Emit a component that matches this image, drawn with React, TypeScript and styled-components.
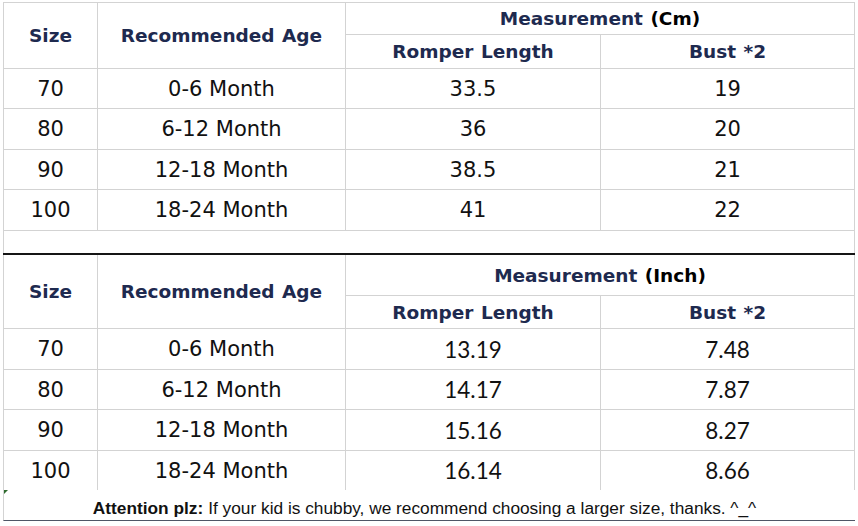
import React from "react";
import styled, { createGlobalStyle } from "styled-components";

const GlobalStyle = createGlobalStyle`
  html, body { margin: 0; padding: 0; background: #ffffff; }
`;

const comic = `"DejaVu Sans", "Noto Sans", sans-serif`;

const Sheet = styled.div`
  width: 852px;
  padding: 2px 0 0 3px;
  display: flex;
  flex-direction: column;
`;

const Grid = styled.div<{ $rows: string; $top?: boolean }>`
  display: grid;
  grid-template-columns: 93px 247px 254px 253px;
  grid-template-rows: ${(p) => p.$rows};
  gap: 1px;
  background: #d3d3d3;
  padding: ${(p) => (p.$top ? "1px 1px 0 1px" : "0 1px 0 1px")};
`;

const Cell = styled.div<{ $row?: string; $col?: string }>`
  background: #ffffff;
  display: flex;
  align-items: center;
  justify-content: center;
  grid-row: ${(p) => p.$row ?? "auto"};
  grid-column: ${(p) => p.$col ?? "auto"};
  white-space: nowrap;
`;

const HeadText = styled.span`
  font-family: ${comic};
  font-weight: 700;
  font-size: 18.5px;
  color: #1e2a4f;
  word-spacing: 1px;
`;

const Unit = styled.span`
  color: #000000;
`;

const DataText = styled.span<{ $alt?: boolean }>`
  font-family: ${(p) => (p.$alt ? `Lato, "Open Sans", sans-serif` : comic)};
  font-size: ${(p) => (p.$alt ? 22.5 : 21)}px;
  color: #111111;
`;

const Divider = styled.div`
  height: 2px;
  background: #151515;
`;

const Note = styled.div`
  height: 31px;
  box-sizing: border-box;
  padding: 6px 10px 0 0;
  border-left: 1px solid #d3d3d3;
  border-bottom: 1px solid #4f5666;
  display: flex;
  align-items: center;
  justify-content: center;
  font-family: "Liberation Sans", Arial, sans-serif;
  font-size: 17.3px;
  color: #111111;
  position: relative;
`;

const Marker = styled.span`
  position: absolute;
  left: 0;
  top: 0;
  width: 0;
  height: 0;
  border-top: 4px solid #2e6b2e;
  border-right: 4px solid transparent;
`;

const Strong = styled.b`
  font-weight: 700;
  margin-right: 5px;
`;

type Row = [string, string, string, string];

const cmRows: Row[] = [
  ["70", "0-6 Month", "33.5", "19"],
  ["80", "6-12 Month", "36", "20"],
  ["90", "12-18 Month", "38.5", "21"],
  ["100", "18-24 Month", "41", "22"],
];

const inchRows: Row[] = [
  ["70", "0-6 Month", "13.19", "7.48"],
  ["80", "6-12 Month", "14.17", "7.87"],
  ["90", "12-18 Month", "15.16", "8.27"],
  ["100", "18-24 Month", "16.14", "8.66"],
];

function Header({ unit }: { unit: string }) {
  return (
    <>
      <Cell $row="1 / 3">
        <HeadText>Size</HeadText>
      </Cell>
      <Cell $row="1 / 3">
        <HeadText>Recommended Age</HeadText>
      </Cell>
      <Cell $col="3 / 5">
        <HeadText>
          Measurement <Unit>({unit})</Unit>
        </HeadText>
      </Cell>
      <Cell>
        <HeadText>Romper Length</HeadText>
      </Cell>
      <Cell>
        <HeadText>Bust *2</HeadText>
      </Cell>
    </>
  );
}

function Body({ rows, alt }: { rows: Row[]; alt?: boolean }) {
  return (
    <>
      {rows.map((r) => (
        <React.Fragment key={r[0]}>
          <Cell>
            <DataText>{r[0]}</DataText>
          </Cell>
          <Cell>
            <DataText>{r[1]}</DataText>
          </Cell>
          <Cell>
            <DataText $alt={alt}>{r[2]}</DataText>
          </Cell>
          <Cell>
            <DataText $alt={alt}>{r[3]}</DataText>
          </Cell>
        </React.Fragment>
      ))}
    </>
  );
}

export default function App() {
  return (
    <>
      <GlobalStyle />
      <Sheet>
        <Grid $top $rows="31px 33px 39px 40px 39px 40px 22px">
          <Header unit="Cm" />
          <Body rows={cmRows} />
          <Cell $col="1 / -1" />
        </Grid>
        <Divider />
        <Grid $rows="40px 32px 40px 39px 40px 39px">
          <Header unit="Inch" />
          <Body rows={inchRows} alt />
        </Grid>
        <Note>
          <Marker />
          <Strong>Attention plz:</Strong>
          If your kid is chubby, we recommend choosing a larger size, thanks. ^_^
        </Note>
      </Sheet>
    </>
  );
}
